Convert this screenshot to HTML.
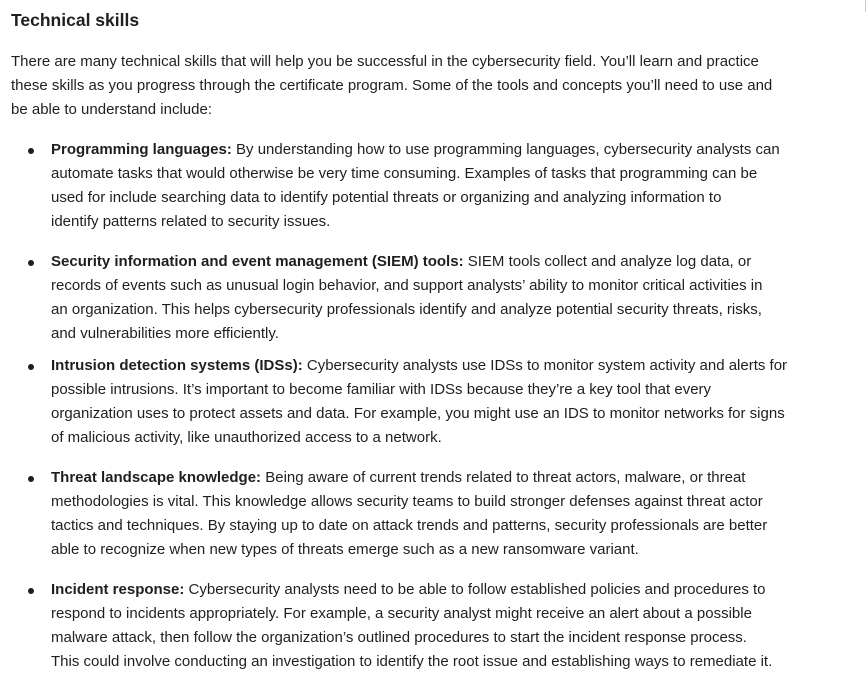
<!DOCTYPE html>
<html><head><meta charset="utf-8"><style>
html,body{margin:0;padding:0;background:#fff;width:868px;height:697px;overflow:hidden}
body{font-family:"Liberation Sans",Arial,sans-serif;color:#1f1f1f;font-size:15px;line-height:24px;position:relative}
.edge{position:absolute;left:865px;top:0;width:1px;height:12px;background:#ccc}
h2{position:absolute;left:11px;top:7px;margin:0;font-size:17.5px;font-weight:bold;line-height:26px}
.p{position:absolute;left:11px;white-space:nowrap}
.li{position:absolute;left:51px;white-space:nowrap}
.li::before{content:"";position:absolute;left:-23px;top:10px;width:6px;height:6px;border-radius:50%;background:#1f1f1f}
b{font-weight:bold}
</style></head><body>
<div class="edge"></div>
<h2>Technical skills</h2>
<div class="p" style="top:50px">There are many technical skills that will help you be successful in the cybersecurity field. You’ll learn and practice<br>these skills as you progress through the certificate program. Some of the tools and concepts you’ll need to use and<br>be able to understand include:</div>
<div class="li" style="top:138px"><b>Programming languages:</b> By understanding how to use programming languages, cybersecurity analysts can<br>automate tasks that would otherwise be very time consuming. Examples of tasks that programming can be<br>used for include searching data to identify potential threats or organizing and analyzing information to<br>identify patterns related to security issues.</div>
<div class="li" style="top:250px"><b>Security information and event management (SIEM) tools:</b> SIEM tools collect and analyze log data, or<br>records of events such as unusual login behavior, and support analysts’ ability to monitor critical activities in<br>an organization. This helps cybersecurity professionals identify and analyze potential security threats, risks,<br>and vulnerabilities more efficiently.</div>
<div class="li" style="top:354px"><b>Intrusion detection systems (IDSs):</b> Cybersecurity analysts use IDSs to monitor system activity and alerts for<br>possible intrusions. It’s important to become familiar with IDSs because they’re a key tool that every<br>organization uses to protect assets and data. For example, you might use an IDS to monitor networks for signs<br>of malicious activity, like unauthorized access to a network.</div>
<div class="li" style="top:466px"><b>Threat landscape knowledge:</b> Being aware of current trends related to threat actors, malware, or threat<br>methodologies is vital. This knowledge allows security teams to build stronger defenses against threat actor<br>tactics and techniques. By staying up to date on attack trends and patterns, security professionals are better<br>able to recognize when new types of threats emerge such as a new ransomware variant.</div>
<div class="li" style="top:578px"><b>Incident response:</b> Cybersecurity analysts need to be able to follow established policies and procedures to<br>respond to incidents appropriately. For example, a security analyst might receive an alert about a possible<br>malware attack, then follow the organization’s outlined procedures to start the incident response process.<br>This could involve conducting an investigation to identify the root issue and establishing ways to remediate it.</div>
</body></html>
